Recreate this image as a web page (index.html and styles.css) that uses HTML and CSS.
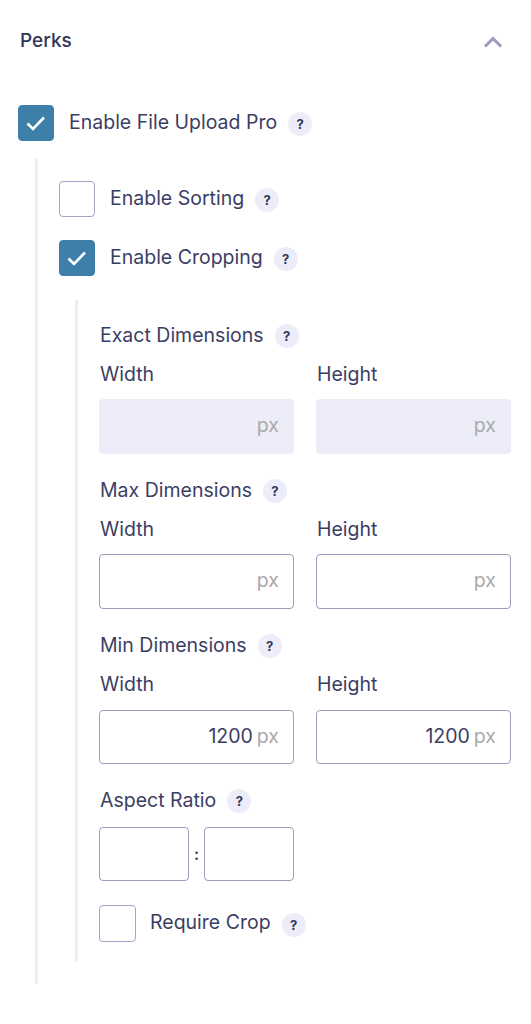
FILE: index.html
```html
<!DOCTYPE html>
<html lang="en">
<head>
<meta charset="utf-8">
<title>Perks</title>
<link rel="stylesheet" href="styles.css">
</head>
<body>
<section class="panel">
  <header class="panel-head">
    <h2 class="panel-title">Perks</h2>
    <svg class="chevron" viewBox="0 0 20 12" width="20" height="12"><path d="M2 10.5 L10 2.5 L18 10.5" fill="none" stroke="#9a9cc0" stroke-width="3"/></svg>
  </header>

  <div class="check-row top">
    <span class="box checked"><svg viewBox="0 0 20 20" width="20" height="20"><path d="M1.5 10.5 L7 16 L18 4.5" fill="none" stroke="#fff" stroke-width="2.6"/></svg></span>
    <span class="label">Enable File Upload Pro</span><span class="help">?</span>
  </div>

  <div class="nest outer">
    <div class="check-row">
      <span class="box"></span>
      <span class="label">Enable Sorting</span><span class="help">?</span>
    </div>
    <div class="check-row second">
      <span class="box checked"><svg viewBox="0 0 20 20" width="20" height="20"><path d="M1.5 10.5 L7 16 L18 4.5" fill="none" stroke="#fff" stroke-width="2.6"/></svg></span>
      <span class="label">Enable Cropping</span><span class="help">?</span>
    </div>

    <div class="nest inner">
      <div class="group">
        <div class="group-title"><span class="label">Exact Dimensions</span><span class="help">?</span></div>
        <div class="fields">
          <div class="field"><span class="label">Width</span><div class="input disabled"><span class="unit">px</span></div></div>
          <div class="field"><span class="label">Height</span><div class="input disabled"><span class="unit">px</span></div></div>
        </div>
      </div>
      <div class="group">
        <div class="group-title"><span class="label">Max Dimensions</span><span class="help">?</span></div>
        <div class="fields">
          <div class="field"><span class="label">Width</span><div class="input"><span class="unit">px</span></div></div>
          <div class="field"><span class="label">Height</span><div class="input"><span class="unit">px</span></div></div>
        </div>
      </div>
      <div class="group min">
        <div class="group-title"><span class="label">Min Dimensions</span><span class="help">?</span></div>
        <div class="fields">
          <div class="field"><span class="label">Width</span><div class="input"><span class="value">1200</span><span class="unit">px</span></div></div>
          <div class="field"><span class="label">Height</span><div class="input"><span class="value">1200</span><span class="unit">px</span></div></div>
        </div>
      </div>
      <div class="group aspect">
        <div class="group-title"><span class="label">Aspect Ratio</span><span class="help">?</span></div>
        <div class="ratio"><div class="input"></div><span class="colon">:</span><div class="input"></div></div>
      </div>
      <div class="check-row crop">
        <span class="box"></span>
        <span class="label">Require Crop</span><span class="help">?</span>
      </div>
    </div>
  </div>
</section>
</body>
</html>
```

FILE: styles.css
```css
* { box-sizing: border-box; }
html, body { margin: 0; background: #fff; }
body {
  width: 531px;
  height: 1024px;
  overflow: hidden;
  font-family: Inter, "Liberation Sans", sans-serif;
  color: #3b3e63;
}
.panel { padding: 30px 20px 0 18px; }
.panel-head {
  display: flex;
  justify-content: space-between;
  align-items: center;
  height: 22px;
  padding-left: 2px;
}
.panel-title { margin: 0; font-size: 19px; font-weight: 500; line-height: 22px; color: #32355a; }
.chevron { margin-right: 8px; margin-top: 2px; }
.check-row { display: flex; align-items: center; }
.check-row.top { margin-top: 53px; height: 36px; }
.box {
  flex: none;
  width: 36px;
  height: 36px;
  border: 1px solid #a3a5c6;
  border-radius: 4px;
  background: #fff;
  display: flex;
  align-items: center;
  justify-content: center;
}
.box.checked { background: #3d7fa8; border-color: #3d7fa8; }
.label { font-size: 19.5px; line-height: 22px; color: #3b3e63; white-space: nowrap; }
.check-row .label { margin-left: 15px; margin-bottom: 3px; }
.help {
  flex: none;
  width: 24px;
  height: 24px;
  margin-left: 11px;
  margin-top: 2px;
  border-radius: 50%;
  background: #ecedf8;
  color: #32355a;
  font-size: 13px;
  font-weight: 700;
  line-height: 24px;
  text-align: center;
}
.nest { border-left: 3px solid #ecedf8; }
.nest.outer { margin: 17px 0 0 17px; padding: 23px 0 22px 21px; height: 826px; width: 476px; }
.check-row.second { margin-top: 23px; }
.nest.inner { margin: 24px 0 0 16px; padding: 23px 0 0 21px; height: 662px; width: 436px; }
.group { margin-bottom: 24px; }
.group-title { display: flex; align-items: center; height: 24px; }
.group-title .label, .field .label { padding-left: 1px; }
.fields { display: flex; gap: 22px; margin-top: 15px; }
.field { width: 195px; display: flex; flex-direction: column; }
.field .label { height: 24px; line-height: 24px; }
.input {
  height: 55px;
  margin-top: 13px;
  border: 1px solid #9a9cc0;
  border-radius: 4px;
  background: #fff;
  display: flex;
  align-items: center;
  justify-content: flex-end;
  padding: 0 14px 3px 0;
  gap: 4px;
  font-size: 19.5px;
}
.input.disabled { background: #ecedf8; border-color: #ecedf8; }
.unit { color: #a9a9a9; }
.value { color: #3b3e63; }
.group.min .input { height: 54px; margin-top: 14px; }
.group.aspect { margin-bottom: 24px; }
.ratio { display: flex; align-items: center; width: 195px; margin-top: 15px; }
.ratio .input { width: 90px; height: 54px; margin: 0; }
.colon { width: 15px; text-align: center; font-size: 16px; font-weight: 600; }
.crop .box { width: 37px; height: 37px; }
.crop .label { margin-left: 14px; }
```
